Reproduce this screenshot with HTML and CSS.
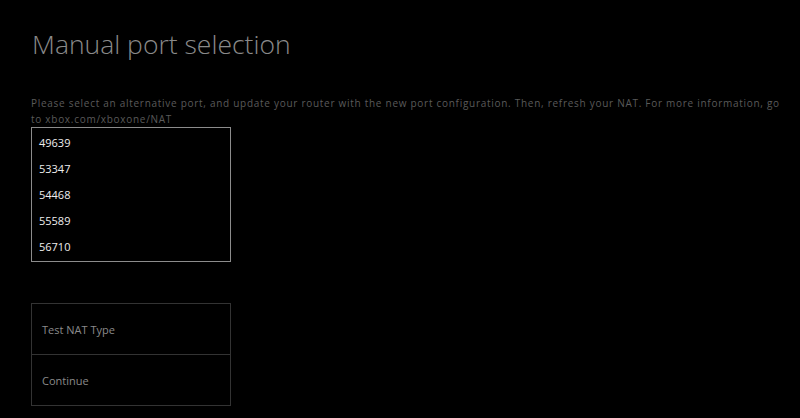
FILE: index.html
```html
<!DOCTYPE html>
<html lang="en">
<head>
  <meta charset="UTF-8">
  <title>Manual port selection</title>
  <link rel="stylesheet" href="styles.css">
</head>
<body>
  <main class="page">
    <h1 class="title">Manual port selection</h1>
    <p class="info">Please select an alternative port, and update your router with the new port configuration. Then, refresh your NAT. For more information, go to xbox.com/xboxone/NAT</p>

    <!-- Lista de puertos -->
    <ul class="ports">
      <li>49639</li>
      <li>53347</li>
      <li>54468</li>
      <li>55589</li>
      <li>56710</li>
    </ul>

    <div class="actions">
      <button class="action">Test NAT Type</button>
      <button class="action">Continue</button>
    </div>
  </main>
</body>
</html>
```

FILE: styles.css
```css
* {
  margin: 0;
  padding: 0;
  box-sizing: border-box;
}

body {
  font-family: 'Open Sans', 'Noto Sans', sans-serif;
  background-color: #000;
  color: #fff;
  width: 800px;
  height: 418px;
  overflow: hidden;
}

.page {
  padding: 26px 0 0 31px;
}

.title {
  font-size: 26.5px;
  font-weight: 300;
  color: #8a8a8a;
  line-height: 36px;
  margin-left: 1px;
}

.info {
  margin-top: 33px;
  font-size: 10px;
  letter-spacing: 0.72px;
  line-height: 16px;
  color: #5a5a5a;
  width: 762px;
}

/* Caja con los puertos */
.ports {
  list-style: none;
  width: 200px;
  height: 135px;
  border: 1px solid #8c8c8c;
  padding: 2px 0 0 7px;
}

.ports li {
  font-size: 11px;
  line-height: 26px;
  color: #eee;
}

.actions {
  margin-top: 41px;
  width: 200px;
  border: 1px solid #333;
  display: flex;
  flex-direction: column;
}

.action {
  height: 50px;
  background: none;
  border: none;
  text-align: left;
  padding-left: 10px;
  font-family: inherit;
  font-size: 11px;
  color: #8a8a8a;
}

.action + .action {
  height: 51px;
  border-top: 1px solid #333;
}
```
